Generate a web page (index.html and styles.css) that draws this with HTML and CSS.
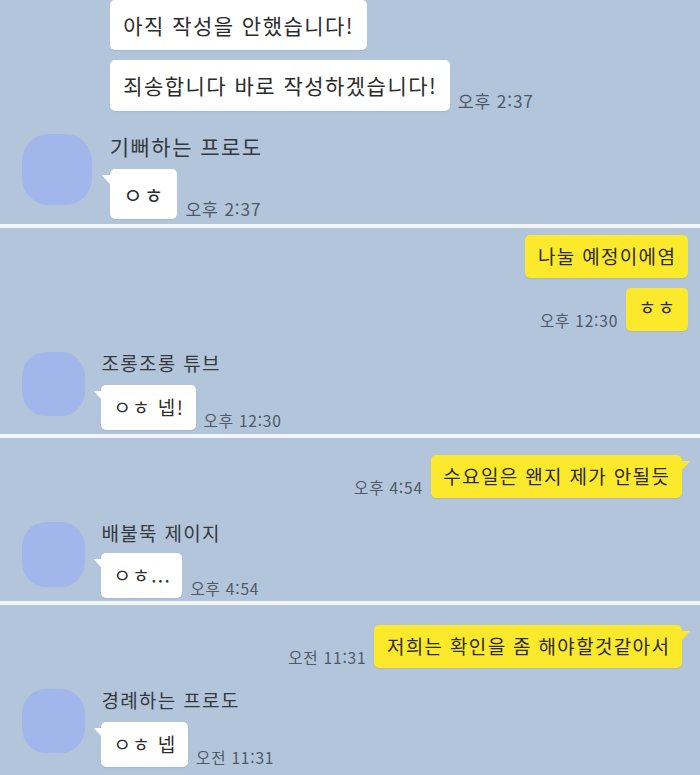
FILE: index.html
```html
<!DOCTYPE html>
<html lang="ko">

<head>
    <meta charset="UTF-8" />
    <meta name="viewport" content="width=device-width, initial-scale=1" />
    <title>채팅 캡처</title>
    <link rel="stylesheet" href="styles.css">
</head>

<body>
    <div class="chat">
        <!-- 1번 캡처 -->
        <section class="panel panel-one">
            <div class="group cont">
                <div class="line">
                    <div class="bubble">아직 작성을 안했습니다!</div>
                </div>
                <div class="line">
                    <div class="bubble">죄송합니다 바로 작성하겠습니다!</div>
                    <span class="time">오후 2:37</span>
                </div>
            </div>
            <div class="group other">
                <div class="avatar"></div>
                <div class="body">
                    <div class="name">기뻐하는 프로도</div>
                    <div class="line">
                        <div class="bubble tail">ㅇㅎ</div>
                        <span class="time">오후 2:37</span>
                    </div>
                </div>
            </div>
        </section>

        <!-- 2번 캡처 -->
        <section class="panel panel-two">
            <div class="group mine">
                <div class="line">
                    <div class="bubble yellow">나눌 예정이에염</div>
                </div>
                <div class="line">
                    <span class="time">오후 12:30</span>
                    <div class="bubble yellow small">ㅎㅎ</div>
                </div>
            </div>
            <div class="group other">
                <div class="avatar"></div>
                <div class="body">
                    <div class="name">조롱조롱 튜브</div>
                    <div class="line">
                        <div class="bubble tail">ㅇㅎ 넵!</div>
                        <span class="time">오후 12:30</span>
                    </div>
                </div>
            </div>
        </section>

        <!-- 3번 캡처 -->
        <section class="panel panel-three">
            <div class="group mine">
                <div class="line">
                    <span class="time">오후 4:54</span>
                    <div class="bubble yellow tail">수요일은 왠지 제가 안될듯</div>
                </div>
            </div>
            <div class="group other">
                <div class="avatar"></div>
                <div class="body">
                    <div class="name">배불뚝 제이지</div>
                    <div class="line">
                        <div class="bubble tail">ㅇㅎ...</div>
                        <span class="time">오후 4:54</span>
                    </div>
                </div>
            </div>
        </section>

        <!-- 4번 캡처 -->
        <section class="panel panel-four">
            <div class="group mine">
                <div class="line">
                    <span class="time">오전 11:31</span>
                    <div class="bubble yellow tail">저희는 확인을 좀 해야할것같아서</div>
                </div>
            </div>
            <div class="group other">
                <div class="avatar"></div>
                <div class="body">
                    <div class="name">경례하는 프로도</div>
                    <div class="line">
                        <div class="bubble tail">ㅇㅎ 넵</div>
                        <span class="time">오전 11:31</span>
                    </div>
                </div>
            </div>
        </section>
    </div>
</body>

</html>
```

FILE: styles.css
```css
body {
    margin: 0;
    background: #f3f6f9;
    font-family: "Noto Sans CJK KR", "Noto Sans", sans-serif;
    color: #2b2b2b;
}

.chat {
    display: flex;
    flex-direction: column;
    gap: 4px;
    width: 700px;
    height: 775px;
    overflow: hidden;
}

/* 캡처 한 장 */
.panel {
    background: #b3c5da;
    font-size: 19px;
    padding: 0 12px 0 22px;
    overflow: hidden;
    box-sizing: border-box;
    flex: 0 0 auto;
}

.panel-one {
    font-size: 21px;
    height: 224px;
    padding-top: 0;
}

.panel-two {
    height: 206px;
    padding-top: 7px;
}

.panel-three {
    height: 163px;
    padding-top: 17px;
}

.panel-four {
    height: 170px;
    padding-top: 20px;
}

.group {
    display: flex;
    flex-direction: column;
    gap: 10px;
}

.group + .group {
    margin-top: 1.1em;
}

.panel-three .group + .group {
    margin-top: 24px;
}

.group.cont {
    padding-left: 4.18em;
}

.group.mine {
    align-items: flex-end;
}

.group.other {
    flex-direction: row;
    gap: 0.85em;
    align-items: flex-start;
}

.line {
    display: flex;
    align-items: flex-end;
    gap: 8px;
}

.avatar {
    width: 3.33em;
    height: 3.4em;
    flex: 0 0 auto;
    border-radius: 38%;
    background: #a3b6ec;
}

.body {
    display: flex;
    flex-direction: column;
    gap: 10px;
}

.panel-three .body {
    gap: 8px;
}

.name {
    line-height: 1.2;
    color: #34393f;
    letter-spacing: 0.07em;
}

/* 말풍선 */
.bubble {
    position: relative;
    background: #ffffff;
    border-radius: 5px;
    padding: 0.6em 0.6em 0.6em 0.64em;
    line-height: 1.2;
    letter-spacing: 0.07em;
    white-space: nowrap;
    box-shadow: 0 1px 1px rgba(60, 80, 100, 0.12);
}

.bubble.yellow {
    background: #fde92b;
    padding: 0.53em 0.62em 0.53em 0.66em;
    color: #2a2a1e;
}

.bubble.small {
    padding-top: 0.4em;
    padding-bottom: 0.66em;
}

.bubble.tail::before {
    content: "";
    position: absolute;
    top: 6px;
    left: -8px;
    width: 9px;
    height: 10px;
    background: inherit;
    clip-path: polygon(0 0, 100% 0, 100% 100%);
}

.bubble.yellow.tail {
    margin-right: 6px;
}

.bubble.yellow.tail::before {
    left: auto;
    right: -8px;
    clip-path: polygon(0 0, 100% 0, 0 100%);
}

.time {
    font-size: 0.82em;
    line-height: 1;
    letter-spacing: 0.05em;
    color: #4d5968;
    margin-bottom: 2px;
    white-space: nowrap;
}
```
